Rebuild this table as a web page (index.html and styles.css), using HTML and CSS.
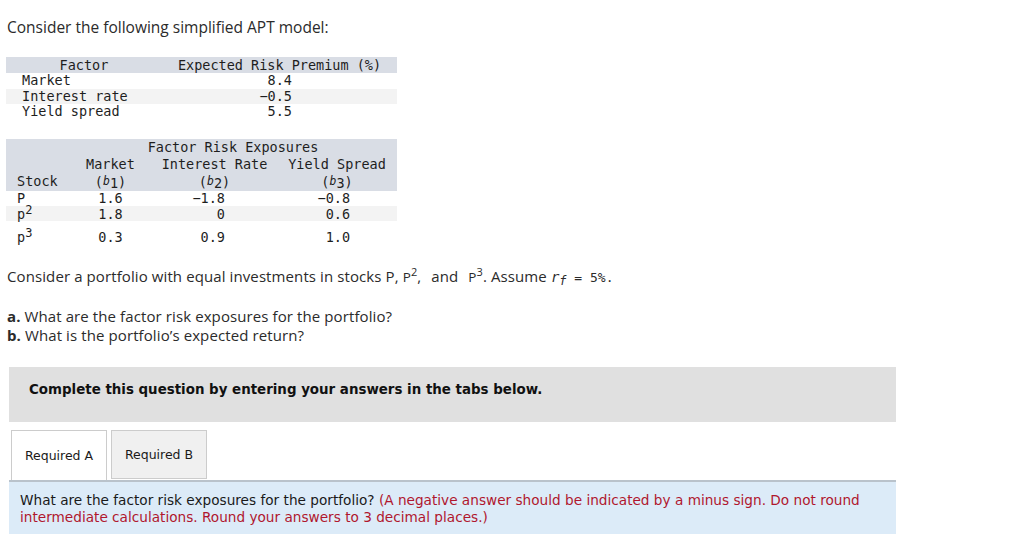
FILE: index.html
```html
<!DOCTYPE html>
<html lang="en">
<head>
<meta charset="utf-8">
<title>APT model</title>
<link rel="stylesheet" href="styles.css">
</head>
<body>
<main class="page">
  <p class="lead">Consider the following simplified APT model:</p>

  <table class="mono t1">
    <colgroup><col class="w-factor"><col class="w-prem"></colgroup>
    <thead>
      <tr class="hd"><th>Factor</th><th>Expected Risk Premium (%)</th></tr>
    </thead>
    <tbody>
      <tr><td class="lbl">Market</td><td class="num">8.4</td></tr>
      <tr class="alt"><td class="lbl">Interest rate</td><td class="num">&minus;0.5</td></tr>
      <tr><td class="lbl">Yield spread</td><td class="num">5.5</td></tr>
    </tbody>
  </table>

  <table class="mono t2">
    <colgroup><col class="w-stock"><col class="w-mkt"><col class="w-ir"><col class="w-ys"></colgroup>
    <thead>
      <tr class="hd"><th></th><th colspan="3">Factor Risk Exposures</th></tr>
      <tr class="hd"><th></th><th>Market</th><th>Interest Rate</th><th>Yield Spread</th></tr>
      <tr class="hd"><th class="stock">Stock</th><th>(<i class="b">b</i><span class="ix">1</span>)</th><th>(<i class="b">b</i><span class="ix">2</span>)</th><th>(<i class="b">b</i><span class="ix">3</span>)</th></tr>
    </thead>
    <tbody>
      <tr><td class="stock">P</td><td class="mkt">1.6</td><td class="ir">&minus;1.8</td><td class="ys">&minus;0.8</td></tr>
      <tr class="alt mid"><td class="stock">p<sup>2</sup></td><td class="mkt">1.8</td><td class="ir">0</td><td class="ys">0.6</td></tr>
      <tr class="last"><td class="stock">p<sup>3</sup></td><td class="mkt">0.3</td><td class="ir">0.9</td><td class="ys">1.0</td></tr>
    </tbody>
  </table>

  <p class="text q">Consider a portfolio with equal investments in stocks P, <span class="sp">P</span><sup>2</sup><span class="ws">, and </span><span class="sp">P</span><sup>3</sup>. Assume <span class="rf"><i>r</i><sub>f</sub> = 5%.</span></p>

  <div class="text parts">
    <p class="line"><b>a.</b> What are the factor risk exposures for the portfolio?</p>
    <p class="line"><b>b.</b> What is the portfolio’s expected return?</p>
  </div>

  <div class="notice">Complete this question by entering your answers in the tabs below.</div>

  <div class="tabs">
    <div class="tab active">Required A</div>
    <div class="tab">Required B</div>
  </div>
  <div class="panel">
    What are the factor risk exposures for the portfolio? <span class="hint">(A negative answer should be indicated by a minus sign. Do not round intermediate calculations. Round your answers to 3 decimal places.)</span>
  </div>
</main>
</body>
</html>
```

FILE: styles.css
```css
* { box-sizing: border-box; }

html, body {
  margin: 0;
  padding: 0;
  background: #ffffff;
}

.page {
  width: 1024px;
  color: #2b2b2b;
}

.lead,
.text {
  font-family: "Open Sans", Lato, sans-serif;
  font-size: 15px;
  line-height: 20px;
  letter-spacing: 0.1px;
  margin: 0;
  padding-left: 7px;
}

.lead {
  padding-top: 17px;
  font-size: 15.5px;
  letter-spacing: 0;
}

/* monospace tables */
.mono {
  font-family: "DejaVu Sans Mono", monospace;
  font-size: 13.5px;
  color: #1e1e1e;
  border-collapse: collapse;
  border-spacing: 0;
  table-layout: fixed;
  margin-left: 6px;
  width: 391px;
  letter-spacing: 0;
}

.mono th,
.mono td {
  padding: 0;
  font-weight: normal;
  white-space: nowrap;
}

.hd { background: #d9dde5; }
.alt { background: #f3f3f3; }

.t1 { margin-top: 20px; }
.t1 .w-factor { width: 156px; }
.t1 .w-prem { width: 235px; }
.t1 th { height: 16px; line-height: 16px; text-align: center; }
.t1 td { height: 15.5px; line-height: 15.5px; }
.t1 .lbl { padding-left: 16px; }
.t1 .num { text-align: right; padding-right: 105px; }

.t2 { margin-top: 19px; }
.t2 .w-stock { width: 63px; }
.t2 .w-mkt { width: 83px; }
.t2 .w-ir { width: 125px; }
.t2 .w-ys { width: 120px; }
.t2 th { height: 17px; line-height: 17px; text-align: center; }
.t2 td { height: 15px; line-height: 15px; }
.t2 tr.mid td { line-height: 13px; vertical-align: bottom; }
.t2 tr.last td { height: 24px; vertical-align: bottom; }
.t2 .stock { text-align: left; padding-left: 11px; }
.t2 .mkt { text-align: center; }
.t2 .ir { text-align: right; padding-right: 52px; }
.t2 .ys { text-align: right; padding-right: 47px; }

.t2 sup {
  font-size: 12px;
  line-height: 0;
  vertical-align: 5px;
}

.b {
  font-size: 11.5px;
  vertical-align: 2px;
}
.ix {
  position: relative;
  top: 1px;
}

/* question text */
.q { margin-top: 21px; }
.q sup {
  font-size: 11px;
  line-height: 0;
  vertical-align: 6px;
}
.sp { font-size: 13.5px; }
.ws { word-spacing: 6px; }

.rf {
  font-family: "DejaVu Sans Mono", monospace;
  font-size: 13px;
  letter-spacing: 0;
}
.rf i { font-size: 14px; }
.rf sub {
  font-size: 12px;
  line-height: 0;
  vertical-align: -3px;
  font-style: italic;
}

.parts {
  margin-top: 19px;
  display: flex;
  flex-direction: column;
}
.parts .line {
  margin: 0;
  height: 19px;
  line-height: 19px;
}
.parts b { font-weight: 700; }

/* instruction box */
.notice {
  margin: 22px 0 0 9px;
  width: 887px;
  height: 55px;
  padding: 15px 0 0 20px;
  background: #e0e0e0;
  font-family: "DejaVu Sans", Verdana, sans-serif;
  font-weight: bold;
  font-size: 13.4px;
  line-height: 16px;
  color: #111111;
}

/* tabs */
.tabs {
  display: flex;
  gap: 4px;
  margin: 8px 0 0 11px;
  height: 50px;
}
.tab {
  width: 96px;
  height: 49px;
  display: flex;
  align-items: center;
  justify-content: center;
  border: 1px solid #cccccc;
  background: #f0f0f0;
  font-family: "DejaVu Sans", Verdana, sans-serif;
  font-size: 12.5px;
  color: #1a1a1a;
}
.tab.active {
  height: 50px;
  background: #ffffff;
  border-bottom: none;
  position: relative;
  z-index: 1;
}

.panel {
  margin-left: 9px;
  width: 887px;
  height: 54px;
  border-top: 2px solid #b9c2cb;
  background: #dcebf8;
  padding: 10px 11px 0 11px;
  font-family: "DejaVu Sans", Verdana, sans-serif;
  font-size: 13.65px;
  line-height: 17px;
  color: #1a1a1a;
}
.hint { color: #b0172e; }
```
